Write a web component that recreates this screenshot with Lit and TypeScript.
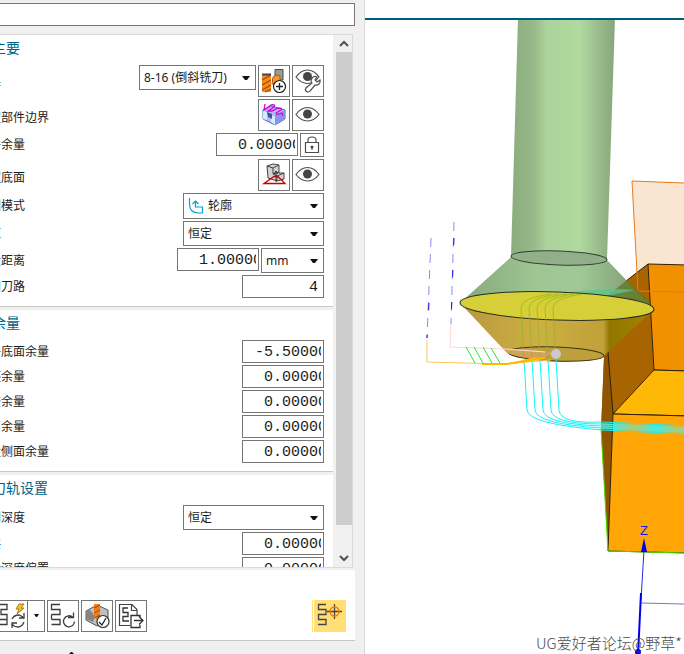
import { LitElement, html, svg, css, nothing, TemplateResult } from "lit";
import { customElement, property } from "lit/decorators.js";

const icons: Record<string, TemplateResult> = {
  eye: svg`<path d="M4 15.500Q9 8.500 15.500 8.500T27 15.500Q22 22 15.500 22T4 15.500Z" fill="#fff" stroke="#4d4d4d" stroke-width="1.200"/><circle cx="15.500" cy="15" r="4.500" fill="#454545"/>`,
  eyeTool: svg`<path d="M4 12Q9 5 15.500 5T27 12Q22 18.500 15.500 18.500T4 12Z" fill="#fff" stroke="#4d4d4d" stroke-width="1.200"/><circle cx="15.500" cy="11.500" r="4.500" fill="#454545"/>
    <path d="M25 12a4 4 0 0 0-5 6l-6 5a2.500 2.500 0 1 0 4 3l5-6a4 4 0 0 0 5-5l-3 2-2-2Z" fill="#fff" stroke="#4d4d4d" stroke-width="1.200"/>`,
  tool: svg`<path d="M4 9h9v18H4Z" fill="#f58a1f"/><path d="M4 15l9-5M4 20l9-5M4 25l9-5M7 27l6-3" stroke="#a34c00" stroke-width="1.300"/><path d="M4 9.500h9" stroke="#444" fill="none" stroke-width="2"/>
    <path d="M17 4.500h8V15h-8Z" fill="#9b9b9b" stroke="#4a4a4a"/><path d="M15 12l3-2 4 1v5l-4 3h-4Z" fill="#f59a28" stroke="#b05a00"/><circle cx="21.500" cy="21.500" r="6" fill="#fff" stroke="#222" stroke-width="1.200"/><path d="M18 21.500h7M21.500 18v7" stroke="#222" stroke-width="1.300"/>`,
  boundary: svg`<path d="M5 11l8-4 14 4v9l-10 6-12-6Z" fill="#aebcff" stroke="#5867b5"/><path d="M17 16l10-5v9l-10 6Z" fill="#8795ea"/><path d="M5 11.500l4 1.500v8l-4-1ZM13 17h4v9l-4-3Z" fill="#d1ecff"/><path d="M9 13l5 2v5l-4-2Z" fill="#4b5388"/><path d="M7 5l-1 6 7-5q5-1 3 2l-6 4h4l6-3q5 0 3 2l-5 3q0 2 3 1l3-1 1 3" fill="none" stroke="#d800d8" stroke-width="1.300"/>`,
  floor: svg`<path d="M9 7l6-2 6 1v8h5v6l-7 2-9-3Z" fill="#d2d2d2" stroke="#444"/><path d="M9 7l6 2 6-3M15 9v6l6-2M15 15l4 2 7-3M19 17v5" fill="none" stroke="#444"/><path d="M6 24.500l10-7h4l7 7Z" fill="none" stroke="#c00" stroke-width="1.300"/><path d="M18 12v11m-2-8l2-3 2 3" stroke="#333" fill="none"/>`,
  lock: svg`<path d="M5.500 9.500h13v10h-13ZM8 9V7q0-3 4-3t4 3v2" fill="none" stroke="#4d4d4d" stroke-width="1.200"/><circle cx="12" cy="14" r="1.500" fill="#444"/><path d="M12 14v3" stroke="#444"/>`,
  generate: svg`<path d="M2 4.500h9v5H5v5h6v5M4 19.500h7v5H3" fill="none" stroke="#3c3c3c" stroke-width="1.300"/><path d="M23 4h5l-3 4h3l-7 6 2-5h-3Z" fill="#ffc30f" stroke="#a87b20"/><path d="M16 19q2-4 7-4l4 2m1-4v5h-5M28 22q-2 5-6 5t-6-3m0 4v-5h5" fill="none" stroke="#3c3c3c" stroke-width="1.300"/>`,
  replay: svg`<path d="M13 4.500H4.500v5H13v5H4.500M4.500 19.500H13v5H4.500M4.500 14.500v5" fill="none" stroke="#3c3c3c" stroke-width="1.300"/><path d="M26 17.500a5.500 5.500 0 1 0 1.500 4M26.500 12.500v5H21" fill="none" stroke="#3c3c3c" stroke-width="1.300"/>`,
  verify: svg`<path d="M5 11l11-6 11 5v10l-11 6-11-6Z" fill="#c0c0c0" stroke="#555"/><path d="M5 11l4-1 5 6-2 6-7-3Z" fill="#858585"/><path d="M13 4h6v13l-3 2-3-2Z" fill="#f37e17"/><path d="M13 8l6-3M13 13l6-3M13 18l6-3" stroke="#a94a00"/><circle cx="22" cy="21.500" r="6" fill="#fff" stroke="#333" stroke-width="1.200"/><path d="M18 22l3 3 4-7" fill="none" stroke="#222" stroke-width="1.300"/>`,
  output: svg`<path d="M15 25.500H4.500v-21H17l5 5V15M16.500 5v5.500H22" fill="none" stroke="#444" stroke-width="1.200"/><path d="M13 8H8v4.500h5v4H8V21h6" fill="none" stroke="#333" stroke-width="1.300"/><path d="M25 17v-1.500h-9v12h9V25M19 20.500h9m-4-4l4 4-4 4" fill="none" stroke="#333" stroke-width="1.300"/>`,
  target: svg`<path d="M12 4.500H4.500v5H12v5H4.500v5H12v5H4" fill="none" stroke="#444" stroke-width="1.300"/><path d="M13 11.500h15M20.500 4v15" stroke="#444" stroke-width="1.300"/><circle cx="20.500" cy="11.500" r="4.500" fill="none" stroke="#f57b00" stroke-width="1.400"/>`,
};

@customElement("icon-button")
class IconButton extends LitElement {
  @property() icon = "";
  @property() label = "";
  @property({ type: Boolean }) small = false;
  @property({ type: Boolean }) active = false;
  static styles = css`
    :host { display: block; }
    button { display: block; box-sizing: border-box; width: 32px; height: 32px; padding: 0; border: 1px solid #767676; background: #fff; }
    button.small { width: 24px; height: 24px; }
    button.active { border-color: #ffdf76; background: #ffdf76; }
    svg { display: block; margin: -1px; }
  `;
  render() {
    const n = this.small ? 24 : 32;
    return html`<button class="${this.small ? "small" : ""} ${this.active ? "active" : ""}" aria-label=${this.label}>
      <svg width=${n} height=${n} viewBox="0 0 ${n} ${n}">${icons[this.icon]}</svg></button>`;
  }
}

@customElement("app-root")
class AppRoot extends LitElement {
  static styles = css`
    :host { display: flex; height: 100vh; overflow: hidden; background: #fff; color: #1b1b1b; font: 12px/16px "Noto Sans", "Noto Sans CJK SC", sans-serif; }
    .panel { display: flex; flex-direction: column; flex: 0 0 365px; box-sizing: border-box; padding: 3px 9px 0 0; border-right: 1px solid #dadada; background: #f0f0f0; overflow: hidden; }
    .name { box-sizing: border-box; width: 100%; height: 23px; flex: none; border: 1px solid #767676; border-left: 0; background: #fff; }
    .scroller { display: flex; flex: 1; min-height: 0; margin: 8px 2px 2px 0; border: 1px solid #dadada; border-left: 0; gap: 3px; }
    .content { flex: 1; min-width: 0; overflow: hidden; }
    section { background: #fff; padding: 0 9px 8px 0; border-bottom: 1px solid #c8c8c8; margin-bottom: 3px; }
    h2 { margin: 0 0 0 -8px; height: 30px; font: 14px/24px "Noto Sans CJK SC", sans-serif; color: #006487; }
    .row { display: flex; align-items: center; margin-bottom: 2px; }
    .row:last-child { margin-bottom: 0; }
    .row label { flex: 1; margin-left: -11px; white-space: nowrap; }
    .row.low label { padding-top: 5px; }
    .controls { display: flex; align-items: flex-start; gap: 2px; }
    .number { box-sizing: border-box; width: 82px; height: 23px; padding: 2px 2px 0 21px; border: 1px solid #767676; border-radius: 0; background: #fff; color: #1b1b1b; font: 15px/19px "Liberation Mono", monospace; }
    .number.signed { padding-left: 12px; }
    .number.whole { padding-right: 5px; text-align: right; }
    .pick { display: grid; align-items: center; height: 25px; }
    .pick > * { grid-area: 1 / 1; }
    .pick.tool { width: 117px; }
    .pick.wide { width: 141px; }
    .pick.tall { height: 26px; }
    .pick.unit { width: 63px; }
    select { appearance: none; box-sizing: border-box; width: 100%; height: 100%; padding: 0 16px 0 4px; border: 1px solid #767676; border-radius: 0; background: #fff; color: #1b1b1b; font: inherit; }
    .tall select { padding-left: 24px; }
    .caret { justify-self: end; margin-right: 6px; pointer-events: none; }
    .mode { margin-left: 5px; pointer-events: none; }
    .bar { display: flex; flex-direction: column; width: 16px; }
    .bar svg { flex: none; }
    .track { flex: 1; }
    .thumb { height: 95%; background: #cdcdcd; }
    footer { display: flex; gap: 2px; align-items: center; box-sizing: border-box; flex: none; height: 71px; padding: 30px 9px 9px 0; border-bottom: 1px solid #c8c8c8; background: #fff; }
    .split { display: flex; margin-left: -4px; }
    .more { display: grid; place-items: center; box-sizing: border-box; width: 17px; height: 32px; padding: 0; border: 1px solid #767676; border-left: 0; background: #fff; }
    .spacer { flex: 1; }
    .toggle { border-left: 1px solid #ffdf76; padding-left: 1px; }
    .edge { display: flex; align-items: flex-end; flex: none; height: 13px; padding-left: 69px; }
    main { position: relative; display: flex; flex-direction: column; flex: 1; min-width: 0; padding-top: 18px; }
    .scene { flex: 1; min-height: 0; width: 100%; border-top: 2px solid #005b83; }
    .mark { position: absolute; right: 2px; bottom: 0; color: #4c4c4c; font: 300 15px/22px "Noto Sans CJK SC", sans-serif; white-space: nowrap; }
    .z { font: 13px "Liberation Sans", sans-serif; fill: #1818f0; }
  `;

  caret = () => html`<svg class="caret" width="8" height="4" viewBox="0 0 8 4"><path d="M0 0h8L5 4H3Z" fill="#111"/></svg>`;

  pick(id: string, kind: string, text: string) {
    return html`<div class="pick ${kind}">
      <select id=${id} aria-label=${text}><option>${text}</option></select>
      ${kind.includes("tall") ? html`<svg class="mode" width="18" height="18" viewBox="0 0 18 18"><path d="M1.500 1v6q0 9 9 9h4v-6H7.500V4M4.500 7l3-3 3 3" fill="none" stroke="#00a3cc" stroke-width="1.200"/></svg>` : nothing}
      ${this.caret()}</div>`;
  }

  num(id: string, value: string, kind = "") {
    return html`<input id=${id} class="number ${kind}" .value=${value}>`;
  }

  row(id: string, label: string, controls: unknown, kind = "") {
    return html`<div class="row ${kind}"><label for=${id}>${label}</label><div class="controls">${controls}</div></div>`;
  }

  btn(icon: string, label: string) {
    return html`<icon-button icon=${icon} label=${label}></icon-button>`;
  }

  scene() {
    const passes = [0, 1, 2, 3, 4];
    return svg`
      <defs>
        <linearGradient id="shank"><stop offset="0" stop-color="#8bac7c"/><stop offset=".22" stop-color="#98b98a"/><stop offset=".34" stop-color="#abd39a"/><stop offset=".66" stop-color="#b1da9f"/><stop offset=".84" stop-color="#9bbd8d"/><stop offset="1" stop-color="#86a779"/></linearGradient>
        <linearGradient id="cone"><stop offset="0" stop-color="#86a67c"/><stop offset=".4" stop-color="#9fc693"/><stop offset=".62" stop-color="#a0c896"/><stop offset=".85" stop-color="#86a67c"/><stop offset="1" stop-color="#7c9b70"/></linearGradient>
        <linearGradient id="tip"><stop offset="0" stop-color="#b8973c"/><stop offset=".4" stop-color="#cdb044"/><stop offset=".74" stop-color="#c0a038"/><stop offset=".77" stop-color="#927600"/><stop offset="1" stop-color="#a78300"/></linearGradient>
      </defs>
      <path d="M632 181l52 2v110l-46-2Z" fill="#fae5d2"/>
      <g stroke="#302000" stroke-width="1" stroke-linejoin="round">
        <path d="M648 264l-44 34v59l-3 73 7 121 5-137 41-44Z" fill="#a86400" stroke="none"/>
        <path d="M604 357l4-5 5 62-5 137-7-121Z" fill="#8f5500" stroke="none"/>
        <path d="M648 264l40 1v106l-34-1Z" fill="#f29100"/>
        <path d="M654 370l34 1v45l-75-2Z" fill="#ffb805"/>
        <path d="M613 414l75 2v137l-80-2Z" fill="#ffa505"/>
        <path d="M648 264l-44 34M608 352l5 62" fill="none"/>
      </g>
      <path d="M601 428l7 123 76 2" fill="none" stroke="#4ee000"/>
      <path d="M684 183l-52-2 6 110 46 1" fill="none" stroke="#e8791c"/>
      <path d="M518 18h97l-8 242-96-3Z" fill="url(#shank)"/>
      <path d="M511 257q48 12 96 3l47 49-194-6Z" fill="url(#cone)"/>
      <path d="M627 280l19 18 8 11-49-2v-9Z" fill="#61761f" opacity=".75"/>
      <path d="M460 303l47 50q49 16 97 3l50-47Z" fill="url(#tip)"/>
      <ellipse cx="559" cy="258" rx="48" ry="7" transform="rotate(2 559 258)" fill="#91b08a" stroke="#33402f"/>
      <path d="M570 292q45-4 64-2l-22 5Z" fill="#59c58e" opacity=".8"/>
      <ellipse cx="557" cy="306" rx="97" ry="14" transform="rotate(2 557 306)" fill="#d7cf37" stroke="#272f20"/>
      <ellipse cx="556" cy="354" rx="48" ry="7" transform="rotate(2 556 354)" fill="#bda03c" stroke="#3c3616"/>
      <path d="M507 350q22-3 46 3l-13 6q-20-1-33-6Z" fill="#d0a458"/>
      ${passes.map(i => svg`<path d="M${524 + i * 8} 360L${521 + i * 8} 308q0-10 30-14" fill="none" stroke="#90b51c" opacity=".75"/>
        <path d="M${524 + i * 8} 360l3 50q1 14 ${75 - i * 8} ${20 - i * 2}l86 4" fill="none" stroke="#19f1f4"/>`)}
      <path d="M601 423l83 4v6l-83-4Z" fill="#69e8d5" opacity=".6"/>
      <g fill="none">
        <path d="M431 238l-4 100M454 222l-3 102" stroke="#8c8cf4" stroke-dasharray="9 7"/>
        <path d="M429 303l-2 35M454 238l-3 86" stroke="#1515dc" stroke-dasharray="7 25"/>
        <path d="M451 324l-1 23 55 2 40 3" stroke="#ffd5df"/>
        <path d="M427 340v22l76 2 48-4" stroke="#ffc35a"/>
        <path d="M466 347l9 16m-1-16l9 16m0-16l9 16m-1-15l9 15" stroke="#27e827"/>
        <path d="M482 364h25l35-6m-27 5l20-5m-14 4l24-4" stroke="#ffb800" stroke-width="2"/>
      </g>
      <circle cx="556" cy="354" r="5" fill="#c9c9ce"/>
      <path d="M641 603l43 1" stroke="#7474e4"/><path d="M644 550l-3 50" stroke="#2929e8"/><path d="M641 593l-3 62" stroke="#0000f0" stroke-width="2"/>
      <path d="M644 538l3 14h-6Z" fill="#0000e8"/><circle cx="638" cy="652" r="3" fill="#0000e8"/>
      <text class="z" x="640" y="535">Z</text>`;
  }

  render() {
    return html`
      <div class="panel">
        <input class="name" aria-label="名称">
        <div class="scroller">
          <div class="content">
            <section>
              <h2>主要</h2>
              ${this.row("tool", "具", html`${this.pick("tool", "tool", "8-16 (倒斜铣刀)")}${this.btn("tool", "新建刀具")}${this.btn("eyeTool", "显示刀具")}`)}
              ${this.row("edge", "定部件边界", html`${this.btn("boundary", "部件边界")}${this.btn("eye", "显示")}`, "low")}
              ${this.row("stock", "件余量", html`${this.num("stock", "0.00000")}<icon-button small icon="lock" label="锁定"></icon-button>`)}
              ${this.row("floor", "定底面", html`${this.btn("floor", "底面")}${this.btn("eye", "显示")}`, "low")}
              ${this.row("mode", "削模式", this.pick("mode", "wide tall", "轮廓"))}
              ${this.row("step", "距", this.pick("step", "wide", "恒定"))}
              ${this.row("dist", "大距离", html`${this.num("dist", "1.00000")}${this.pick("unit", "unit", "mm")}`)}
              ${this.row("extra", "加刀路", this.num("extra", "4", "whole"))}
            </section>
            <section>
              <h2>余量</h2>
              ${this.row("s1", "终底面余量", this.num("s1", "-5.50000", "signed"))}
              ${this.row("s2", "坯余量", this.num("s2", "0.00000"))}
              ${this.row("s3", "查余量", this.num("s3", "0.00000"))}
              ${this.row("s4", "剪余量", this.num("s4", "0.00000"))}
              ${this.row("s5", "量侧面余量", this.num("s5", "0.00000"))}
            </section>
            <section>
              <h2>刀轨设置</h2>
              ${this.row("d1", "削深度", this.pick("d1", "wide", "恒定"))}
              ${this.row("d2", "共", this.num("d2", "0.00000"))}
              ${this.row("d3", "量深度偏置", this.num("d3", "0.00000"))}
            </section>
          </div>
          <div class="bar">
            <svg width="16" height="17"><path d="M4 11l4-4 4 4" fill="none" stroke="#505050" stroke-width="2"/></svg>
            <div class="track"><div class="thumb"></div></div>
            <svg width="16" height="17"><path d="M4 6l4 4 4-4" fill="none" stroke="#505050" stroke-width="2"/></svg>
          </div>
        </div>
        <footer>
          <div class="split">${this.btn("generate", "生成")}<button class="more" aria-label="更多"><svg width="5" height="3"><path d="M0 0h5L3 3H2Z" fill="#111"/></svg></button></div>
          ${this.btn("replay", "重播")}${this.btn("verify", "确认")}${this.btn("output", "输出")}
          <div class="spacer"></div>
          <div class="toggle"><icon-button active icon="target" label="显示刀轨"></icon-button></div>
        </footer>
        <div class="edge"><svg width="5" height="2"><path d="M0 2L2 0h1l2 2Z" fill="#111"/></svg></div>
      </div>
      <main>
        <svg class="scene" viewBox="365 20 319 634" preserveAspectRatio="xMinYMin slice">${this.scene()}</svg>
        <div class="mark">UG爱好者论坛@野草*</div>
      </main>`;
  }
}
